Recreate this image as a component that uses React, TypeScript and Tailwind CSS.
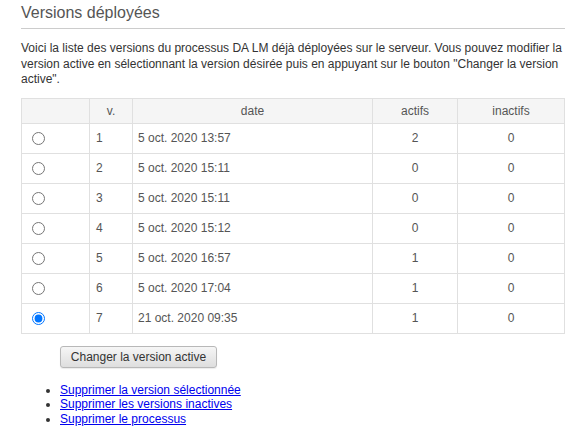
import { useState } from "react";

const versions = [
  { v: 1, date: "5 oct. 2020 13:57", actifs: 2, inactifs: 0 },
  { v: 2, date: "5 oct. 2020 15:11", actifs: 0, inactifs: 0 },
  { v: 3, date: "5 oct. 2020 15:11", actifs: 0, inactifs: 0 },
  { v: 4, date: "5 oct. 2020 15:12", actifs: 0, inactifs: 0 },
  { v: 5, date: "5 oct. 2020 16:57", actifs: 1, inactifs: 0 },
  { v: 6, date: "5 oct. 2020 17:04", actifs: 1, inactifs: 0 },
  { v: 7, date: "21 oct. 2020 09:35", actifs: 1, inactifs: 0 },
];

export default function App() {
  const [selected, setselected] = useState(7);

  return (
    <div className="w-[575px] h-[432px] bg-white font-['Liberation_Sans',Arial,sans-serif] text-[#333] px-[21px] pr-[10px]">
      <h2 className="pt-[4px] pb-[7px] text-[16px] leading-[17px] text-[#555] border-b border-[#ccc]">
        Versions déployées
      </h2>
      <p className="mt-[12px] text-[12px] leading-[15.5px] text-[#333]">
        Voici la liste des versions du processus DA LM déjà déployées sur le serveur. Vous pouvez modifier la
        version active en sélectionnant la version désirée puis en appuyant sur le bouton "Changer la version
        active".
      </p>
      <table className="mt-[10px] w-[544px] border-collapse text-[12px] text-[#555]">
        <thead>
          <tr className="h-[25px] bg-[#f5f5f5]">
            <th className="w-[68px] border border-[#e0e0e0] font-normal"></th>
            <th className="w-[43px] border border-[#e0e0e0] font-normal text-center">v.</th>
            <th className="w-[240px] border border-[#e0e0e0] font-normal text-center">date</th>
            <th className="w-[85px] border border-[#e0e0e0] font-normal text-center">actifs</th>
            <th className="border border-[#e0e0e0] font-normal text-center">inactifs</th>
          </tr>
        </thead>
        <tbody>
          {versions.map((row) => (
            <tr key={row.v} className="h-[30px]">
              <td className="border border-[#e0e0e0] pl-[9px]">
                <input
                  type="radio"
                  name="version"
                  className="block w-[13px] h-[13px] m-0 ml-px"
                  checked={selected === row.v}
                  onChange={() => setselected(row.v)}
                />
              </td>
              <td className="border border-[#e0e0e0] pl-[6px]">{row.v}</td>
              <td className="border border-[#e0e0e0] pl-[5px]">{row.date}</td>
              <td className="border border-[#e0e0e0] text-center">{row.actifs}</td>
              <td className="border border-[#e0e0e0] text-center">{row.inactifs}</td>
            </tr>
          ))}
        </tbody>
      </table>
      <button className="mt-[12px] ml-[39px] h-[22px] w-[157px] rounded-[3px] border border-[#b8b8b8] bg-gradient-to-b from-[#f6f6f6] to-[#dedede] text-[12px] text-[#333] shadow-[0_1px_1px_rgba(0,0,0,0.08)]">
        Changer la version active
      </button>
      <ul className="mt-[15px] pl-[39px] list-disc text-[12px] leading-[14.5px] marker:text-[#333]">
        <li>
          <a href="#" className="text-[#0000ee] underline">Supprimer la version sélectionnée</a>
        </li>
        <li>
          <a href="#" className="text-[#0000ee] underline">Supprimer les versions inactives</a>
        </li>
        <li>
          <a href="#" className="text-[#0000ee] underline">Supprimer le processus</a>
        </li>
      </ul>
    </div>
  );
}
